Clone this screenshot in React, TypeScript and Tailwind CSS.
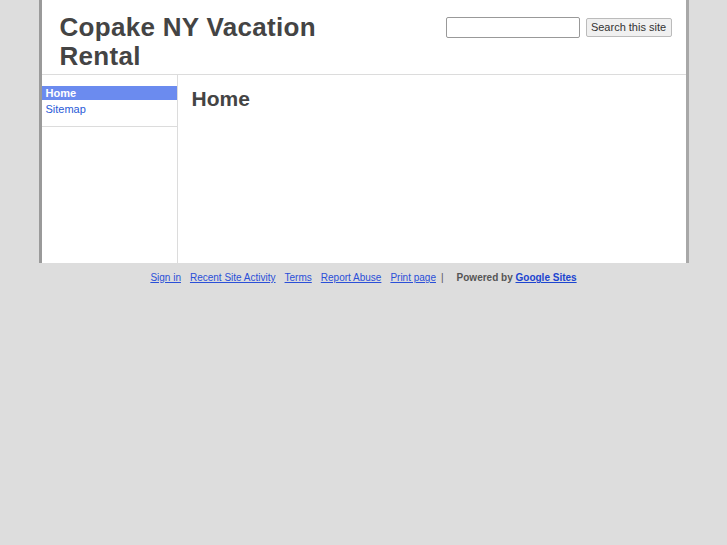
import React from "react";

export default function App() {
  const font = { fontFamily: '"Liberation Sans", Arial, sans-serif' };
  return (
    <div className="min-h-[545px] w-full bg-[#dddddd]" style={font}>
      <div className="mx-auto w-[650px] border-l-[3px] border-r-[3px] border-l-[#9a9a9a] border-r-[#a8a8a8] bg-white">
        <div className="flex h-[75px] justify-between border-b border-[#dcdcdc]">
          <div className="w-[290px] pl-[18px] pt-[13px] text-[26px] font-bold leading-[29px] tracking-[0.3px] text-[#444444]">
            Copake NY Vacation Rental
          </div>
          <div className="flex items-start gap-[6px] pr-[14px] pt-[17px]">
            <div className="h-[21px] w-[134px] rounded-[2px] border border-[#999] bg-white" />
            <button className="mt-[1px] h-[19px] w-[86px] rounded-[2px] border border-[#bbb] bg-[#f0f0f0] text-[11px] leading-[17px] text-[#333]">
              Search this site
            </button>
          </div>
        </div>
        <div className="flex h-[188px]">
          <div className="w-[136px] border-r border-[#dcdcdc]">
            <div className="border-b border-[#dcdcdc] pt-[11px] pb-[10px]">
              <div className="h-[14px] bg-[#6b8bef] pl-[4px] text-[11px] font-bold leading-[14px] text-white">
                Home
              </div>
              <div className="pl-[4px] pt-[2px] text-[11px] leading-[14px] text-[#2a5bd7]">Sitemap</div>
            </div>
          </div>
          <div className="flex-1 pl-[14px] pt-[12px]">
            <h1 className="text-[21px] font-bold leading-[24px] text-[#444444]">Home</h1>
          </div>
        </div>
      </div>
      <div className="flex justify-center pt-[8px] text-[10px] leading-[13px]">
        <div className="flex items-center gap-[9px]">
          <a className="text-[#2a4fd8] underline">Sign in</a>
          <a className="text-[#2a4fd8] underline">Recent Site Activity</a>
          <a className="text-[#2a4fd8] underline">Terms</a>
          <a className="text-[#2a4fd8] underline">Report Abuse</a>
          <a className="text-[#2a4fd8] underline">Print page</a>
          <span className="-ml-[4px] text-[#555]">|</span>
          <span className="ml-[4px] font-bold text-[#555]">
            Powered by <a className="text-[#1b44d0] underline">Google Sites</a>
          </span>
        </div>
      </div>
    </div>
  );
}
